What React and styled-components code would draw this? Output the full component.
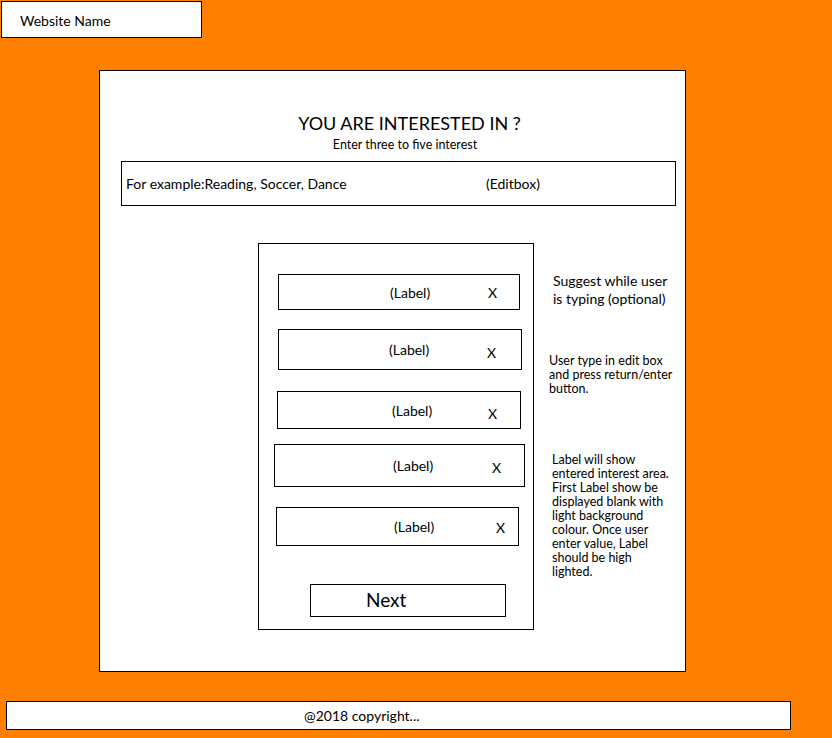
import React from "react";
import styled, { createGlobalStyle } from "styled-components";

const Global = createGlobalStyle`
  html, body { margin: 0; padding: 0; background: #ff8000; }
  body { font-family: Lato, "Open Sans", sans-serif; color: #000; }
  * { box-sizing: border-box; }
`;

const Page = styled.div`
  width: 832px;
  height: 738px;
  background: #ff8000;
  display: flex;
  flex-direction: column;
  align-items: flex-start;
  overflow: hidden;
`;

const Header = styled.header`
  margin: 1px 0 0 1px;
  width: 201px;
  height: 37px;
  background: #fff;
  border: 1px solid #000;
  display: flex;
  align-items: center;
  padding: 2px 0 0 18px;
  font-size: 14px;
`;

const Main = styled.main`
  margin: 32px 0 0 99px;
  width: 587px;
  height: 602px;
  background: #fff;
  border: 1px solid #000;
  display: flex;
  flex-direction: column;
  align-items: flex-start;
`;

const Title = styled.h1`
  margin: 40px 0 0 0;
  align-self: stretch;
  text-align: center;
  padding-left: 34px;
  font-size: 18px;
  line-height: 24px;
  font-weight: 400;
`;

const Subtitle = styled.p`
  margin: 3px 0 0 0;
  align-self: stretch;
  text-align: center;
  padding-left: 25px;
  font-size: 12.5px;
  line-height: 14px;
`;

const EditBox = styled.div`
  margin: 9px 0 0 21px;
  width: 555px;
  height: 45px;
  border: 1px solid #000;
  display: grid;
  grid-template-columns: 360px auto;
  align-items: center;
  padding: 0 0 0 4px;
  font-size: 14px;
`;

const Content = styled.div`
  margin: 37px 0 0 158px;
  display: flex;
  gap: 15px;
`;

const InnerPanel = styled.section`
  width: 276px;
  height: 387px;
  border: 1px solid #000;
  display: flex;
  flex-direction: column;
  align-items: flex-start;
  padding-top: 30px;
`;

const Label = styled.div`
  margin: ${(p) => p.$gap}px 0 0 ${(p) => p.$left}px;
  width: ${(p) => p.$w}px;
  height: ${(p) => p.$h}px;
  border: 1px solid #000;
  display: flex;
  align-items: center;
  padding-left: ${(p) => p.$textX - 1}px;
  font-size: 14px;
`;

const LabelText = styled.span`
  width: ${(p) => p.$span}px;
  flex: none;
`;

const Close = styled.span`
  font-size: 14px;
  margin-top: ${(p) => p.$dy * 2}px;
`;

const NextButton = styled.button`
  margin: 38px 0 0 51px;
  width: 196px;
  height: 33px;
  border: 1px solid #000;
  background: #fff;
  font-family: inherit;
  font-size: 19px;
  text-align: left;
  padding: 0 0 3px 55px;
  color: #000;
`;

const Notes = styled.aside`
  display: flex;
  flex-direction: column;
  align-items: flex-start;
`;

const Note = styled.p`
  margin: ${(p) => p.$top}px 0 0 ${(p) => p.$indent}px;
  font-size: ${(p) => (p.$big ? 14 : 12.5)}px;
  line-height: ${(p) => (p.$big ? 18 : 14)}px;
  white-space: nowrap;
`;

const Footer = styled.footer`
  margin: 29px 0 0 6px;
  width: 785px;
  height: 29px;
  background: #fff;
  border: 1px solid #000;
  display: flex;
  align-items: center;
  padding: 0 0 1px 297px;
  font-size: 14px;
`;

const labels = [
  { gap: 0, left: 19, w: 242, h: 36, textX: 112, closeX: 210, dy: 0 },
  { gap: 19, left: 19, w: 244, h: 41, textX: 111, closeX: 209, dy: 3 },
  { gap: 21, left: 18, w: 244, h: 38, textX: 115, closeX: 211, dy: 3 },
  { gap: 15, left: 15, w: 251, h: 43, textX: 119, closeX: 218, dy: 2 },
  { gap: 20, left: 17, w: 243, h: 39, textX: 118, closeX: 220, dy: 1 },
];

export default function App() {
  return (
    <Page>
      <Global />
      <Header>Website Name</Header>
      <Main>
        <Title>YOU ARE INTERESTED IN ?</Title>
        <Subtitle>Enter three to five interest</Subtitle>
        <EditBox>
          <span>For example:Reading, Soccer, Dance</span>
          <span>(Editbox)</span>
        </EditBox>
        <Content>
          <InnerPanel>
            {labels.map((l, i) => (
              <Label key={i} $gap={l.gap} $left={l.left} $w={l.w} $h={l.h} $textX={l.textX}>
                <LabelText $span={l.closeX - l.textX}>(Label)</LabelText>
                <Close $dy={l.dy}>X</Close>
              </Label>
            ))}
            <NextButton>Next</NextButton>
          </InnerPanel>
          <Notes>
            <Note $big $top={29} $indent={4}>
              Suggest while user
              <br />
              is typing (optional)
            </Note>
            <Note $top={46} $indent={0}>
              User type in edit box
              <br />
              and press return/enter
              <br />
              button.
            </Note>
            <Note $top={57} $indent={3}>
              Label will show
              <br />
              entered interest area.
              <br />
              First Label show be
              <br />
              displayed blank with
              <br />
              light background
              <br />
              colour. Once user
              <br />
              enter value, Label
              <br />
              should be high
              <br />
              lighted.
            </Note>
          </Notes>
        </Content>
      </Main>
      <Footer>@2018 copyright...</Footer>
    </Page>
  );
}
